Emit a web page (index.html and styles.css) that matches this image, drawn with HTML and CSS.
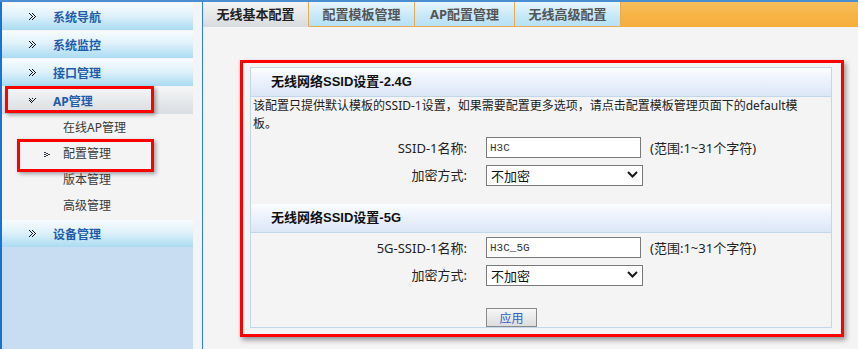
FILE: index.html
```html
<!DOCTYPE html>
<html lang="zh-CN">
<head>
    <meta charset="UTF-8">
    <title>无线基本配置</title>
    <link rel="stylesheet" href="styles.css">
</head>
<body>
    <div class="frame">
        <aside class="sidebar">
            <div class="menu-head">
                <svg class="ico" viewBox="0 0 9 9"><g fill="#111"><rect x="1" y="1" width="1" height="1"/><rect x="4" y="1" width="1" height="1"/><rect x="2" y="2" width="1" height="1"/><rect x="5" y="2" width="1" height="1"/><rect x="3" y="3" width="1" height="1"/><rect x="6" y="3" width="1" height="1"/><rect x="4" y="4" width="1" height="1"/><rect x="7" y="4" width="1" height="1"/><rect x="3" y="5" width="1" height="1"/><rect x="6" y="5" width="1" height="1"/><rect x="2" y="6" width="1" height="1"/><rect x="5" y="6" width="1" height="1"/><rect x="1" y="7" width="1" height="1"/><rect x="4" y="7" width="1" height="1"/></g></svg>
                系统导航
            </div>
            <div class="menu-head">
                <svg class="ico" viewBox="0 0 9 9"><g fill="#111"><rect x="1" y="1" width="1" height="1"/><rect x="4" y="1" width="1" height="1"/><rect x="2" y="2" width="1" height="1"/><rect x="5" y="2" width="1" height="1"/><rect x="3" y="3" width="1" height="1"/><rect x="6" y="3" width="1" height="1"/><rect x="4" y="4" width="1" height="1"/><rect x="7" y="4" width="1" height="1"/><rect x="3" y="5" width="1" height="1"/><rect x="6" y="5" width="1" height="1"/><rect x="2" y="6" width="1" height="1"/><rect x="5" y="6" width="1" height="1"/><rect x="1" y="7" width="1" height="1"/><rect x="4" y="7" width="1" height="1"/></g></svg>
                系统监控
            </div>
            <div class="menu-head">
                <svg class="ico" viewBox="0 0 9 9"><g fill="#111"><rect x="1" y="1" width="1" height="1"/><rect x="4" y="1" width="1" height="1"/><rect x="2" y="2" width="1" height="1"/><rect x="5" y="2" width="1" height="1"/><rect x="3" y="3" width="1" height="1"/><rect x="6" y="3" width="1" height="1"/><rect x="4" y="4" width="1" height="1"/><rect x="7" y="4" width="1" height="1"/><rect x="3" y="5" width="1" height="1"/><rect x="6" y="5" width="1" height="1"/><rect x="2" y="6" width="1" height="1"/><rect x="5" y="6" width="1" height="1"/><rect x="1" y="7" width="1" height="1"/><rect x="4" y="7" width="1" height="1"/></g></svg>
                接口管理
            </div>
            <div class="menu-head open">
                <span class="mark mark-ap"></span>
                <svg class="ico" viewBox="0 0 9 9"><g fill="#111"><rect x="1" y="2" width="1" height="1"/><rect x="4" y="2" width="1" height="1"/><rect x="7" y="2" width="1" height="1"/><rect x="2" y="3" width="1" height="1"/><rect x="6" y="3" width="1" height="1"/><rect x="1" y="4" width="1" height="1"/><rect x="3" y="4" width="1" height="1"/><rect x="5" y="4" width="1" height="1"/><rect x="2" y="5" width="1" height="1"/><rect x="4" y="5" width="1" height="1"/><rect x="3" y="6" width="1" height="1"/></g></svg>
                AP管理
            </div>
            <ul class="submenu">
                <li>在线AP管理</li>
                <li class="current">
                    <span class="mark mark-cfg"></span>
                    <svg class="sub-arrow" viewBox="0 0 6 5"><g fill="#333b48"><rect x="0" y="0" width="2" height="1"/><rect x="2" y="1" width="2" height="1"/><rect x="0" y="2" width="2" height="1"/><rect x="4" y="2" width="2" height="1"/><rect x="2" y="3" width="2" height="1"/><rect x="0" y="4" width="2" height="1"/></g></svg>
                    配置管理
                </li>
                <li>版本管理</li>
                <li>高级管理</li>
            </ul>
            <div class="menu-head">
                <svg class="ico" viewBox="0 0 9 9"><g fill="#111"><rect x="1" y="1" width="1" height="1"/><rect x="4" y="1" width="1" height="1"/><rect x="2" y="2" width="1" height="1"/><rect x="5" y="2" width="1" height="1"/><rect x="3" y="3" width="1" height="1"/><rect x="6" y="3" width="1" height="1"/><rect x="4" y="4" width="1" height="1"/><rect x="7" y="4" width="1" height="1"/><rect x="3" y="5" width="1" height="1"/><rect x="6" y="5" width="1" height="1"/><rect x="2" y="6" width="1" height="1"/><rect x="5" y="6" width="1" height="1"/><rect x="1" y="7" width="1" height="1"/><rect x="4" y="7" width="1" height="1"/></g></svg>
                设备管理
            </div>
            <div class="sidebar-fill"></div>
        </aside>

        <main class="main">
            <nav class="tabs">
                <div class="tab active">无线基本配置</div>
                <div class="tab">配置模板管理</div>
                <div class="tab narrow">AP配置管理</div>
                <div class="tab">无线高级配置</div>
                <div class="tab-fill"></div>
            </nav>

            <div class="content">
                <div class="highlight">
                    <div class="panel">
                        <div class="panel-head">无线网络SSID设置-2.4G</div>
                        <p class="desc">该配置只提供默认模板的SSID-1设置，如果需要配置更多选项，请点击配置模板管理页面下的default模<br>板。</p>

                        <div class="field first">
                            <label>SSID-1名称:</label>
                            <input type="text" value="H3C">
                            <span class="hint">(范围:1~31个字符)</span>
                        </div>
                        <div class="field">
                            <label>加密方式:</label>
                            <div class="select-wrap">
                                <select><option>不加密</option></select>
                                <svg class="chevron" viewBox="0 0 11 7"><path d="M1 1 L5.5 5.5 L10 1" fill="none" stroke="#1a1a1a" stroke-width="2"/></svg>
                            </div>
                        </div>

                        <div class="panel-head second">无线网络SSID设置-5G</div>

                        <div class="field first">
                            <label>5G-SSID-1名称:</label>
                            <input type="text" value="H3C_5G">
                            <span class="hint">(范围:1~31个字符)</span>
                        </div>
                        <div class="field">
                            <label>加密方式:</label>
                            <div class="select-wrap">
                                <select><option>不加密</option></select>
                                <svg class="chevron" viewBox="0 0 11 7"><path d="M1 1 L5.5 5.5 L10 1" fill="none" stroke="#1a1a1a" stroke-width="2"/></svg>
                            </div>
                        </div>

                        <div class="actions">
                            <button type="button">应用</button>
                        </div>
                    </div>
                </div>
            </div>
        </main>
    </div>
</body>
</html>
```

FILE: styles.css
```css
body {
    margin: 0;
    background: #f4f4f4;
    font-family: "Noto Sans", "Noto Sans CJK SC", sans-serif;
    color: #222;
}
.frame {
    display: flex;
    height: 349px;
    border-top: 2px solid #4a8ed2;
    box-sizing: border-box;
}

/* left menu */
.sidebar {
    width: 191px;
    border-left: 2px solid #1c70d8;
    display: flex;
    flex-direction: column;
    flex-shrink: 0;
}
.menu-head {
    position: relative;
    height: 27px;
    margin-top: 1px;
    display: flex;
    align-items: center;
    padding-left: 26px;
    background: linear-gradient(#f7fcfe, #e0f2fb 45%, #aadbf1);
    font-size: 12px;
    font-weight: bold;
    color: #1f5cab;
}
.menu-head.open {
    background: linear-gradient(#f5f6f7, #e6e9eb 50%, #d9dee2);
}
.ico {
    width: 9px;
    height: 9px;
    margin-right: 16px;
}
.submenu {
    list-style: none;
    margin: 0;
    padding: 1px 0 0;
}
.submenu li {
    position: relative;
    height: 26px;
    line-height: 26px;
    padding-left: 61px;
    font-size: 12px;
    color: #3a3a3a;
}
.sub-arrow {
    position: absolute;
    left: 42px;
    top: 11px;
    width: 6px;
    height: 5px;
}
.sidebar-fill {
    flex: 1;
    background: #c8ddf1;
}
.mark {
    position: absolute;
    border: 3px solid #ff0000;
    box-shadow: 2px 2px 4px rgba(0, 0, 0, 0.35);
    box-sizing: border-box;
}
.mark-ap {
    left: 3px;
    top: -1px;
    width: 149px;
    height: 27px;
}
.mark-cfg {
    left: 15px;
    top: -2px;
    width: 137px;
    height: 33px;
}

/* main area */
.main {
    flex: 1;
    margin-left: 9px;
    border-left: 1px solid #2a7de6;
    display: flex;
    flex-direction: column;
}
.tabs {
    display: flex;
    height: 25px;
}
.tab {
    width: 106px;
    box-sizing: border-box;
    border-right: 1px solid #e8aa52;
    border-bottom: 1px solid #e8aa52;
    background: linear-gradient(#e9f6fd, #c8e9f8 55%, #b5e0f4);
    font-size: 13px;
    font-weight: bold;
    color: #555;
    text-align: center;
    line-height: 24px;
}
.tab.narrow {
    width: 100px;
}
.tab.active {
    background: linear-gradient(#f4f4f4, #e4e6e7 60%, #d9dcde);
    border-bottom-color: #d9dcde;
    color: #222;
}
.tab-fill {
    flex: 1;
    background: linear-gradient(#f8be5c, #f7b446 50%, #f6ae3c);
}
.content {
    padding: 33px 0 0 37px;
}
.highlight {
    width: 604px;
    height: 277px;
    box-sizing: border-box;
    border: 3px solid #ff0000;
    box-shadow: 2px 3px 5px rgba(0, 0, 0, 0.4);
    padding: 4px 9px 6px 7px;
}
.panel {
    height: 100%;
    box-sizing: border-box;
    border: 1px solid #c3d7ec;
}
.panel-head {
    height: 28px;
    line-height: 28px;
    padding-left: 20px;
    border-bottom: 1px solid #c3d7ec;
    background: linear-gradient(#fbfdff, #eaf1fb 50%, #dbe7f6);
    font-family: "Liberation Sans", "Noto Sans CJK SC", sans-serif;
    font-size: 13px;
    font-weight: bold;
    color: #111;
}
.panel-head.second {
    margin-top: 19px;
}
.desc {
    margin: 0;
    padding: 0 2px;
    font-size: 12px;
    line-height: 18px;
    color: #222;
}
.field {
    display: flex;
    align-items: center;
    height: 21px;
    margin-top: 6px;
}
.field.first {
    margin-top: 4px;
}
.field label {
    width: 235px;
    box-sizing: border-box;
    padding-right: 19px;
    text-align: right;
    font-size: 13px;
    color: #222;
}
.field input {
    width: 155px;
    height: 21px;
    box-sizing: border-box;
    margin: 0;
    border: 1px solid #7a7a7a;
    padding: 0 3px;
    background: #fff;
    font-family: "Liberation Mono", monospace;
    font-size: 11px;
    color: #333;
}
.hint {
    margin-left: 9px;
    font-size: 13px;
    color: #222;
}
.select-wrap {
    position: relative;
    width: 157px;
    height: 21px;
}
.select-wrap select {
    appearance: none;
    -webkit-appearance: none;
    width: 100%;
    height: 100%;
    margin: 0;
    border: 1px solid #7a7a7a;
    border-radius: 0;
    padding: 0 4px;
    background: #fff;
    font-family: "Noto Sans CJK SC", sans-serif;
    font-size: 13px;
    color: #111;
}
.chevron {
    position: absolute;
    right: 5px;
    top: 7px;
    width: 11px;
    height: 7px;
    pointer-events: none;
}
.actions {
    margin-top: 21px;
    padding-left: 235px;
}
.actions button {
    width: 51px;
    height: 19px;
    border: 1px solid #8a8a8a;
    background: linear-gradient(#f6f6f6, #dcdcdc);
    font-family: "Noto Sans CJK SC", sans-serif;
    font-size: 12px;
    color: #2f62c8;
    padding: 0;
    line-height: 17px;
}
```
